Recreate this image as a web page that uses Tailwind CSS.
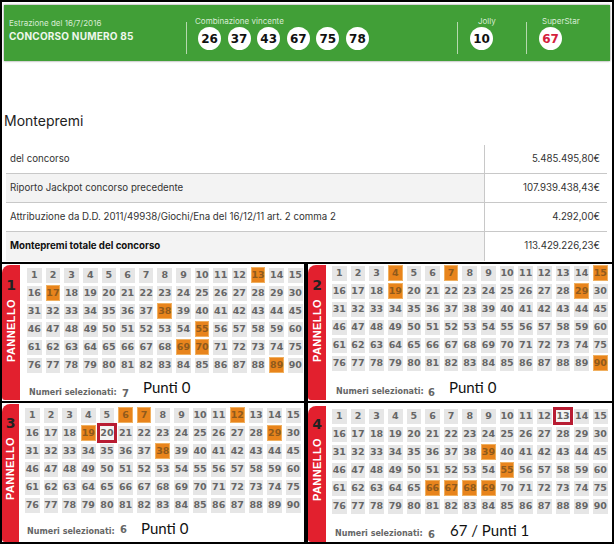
<!DOCTYPE html>
<html lang="en">
  <head>
    <meta charset="UTF-8" />
    <script src="https://cdn.jsdelivr.net/npm/@tailwindcss/browser@4"></script>
    <title>Concorso 85</title>
  </head>
  <body class="bg-white">
    <div class="w-[614px] h-[544px] overflow-hidden flex flex-col font-['Inter','Liberation_Sans',sans-serif]">
      <!-- banner + table -->
      <div class="h-[262px] border-2 border-b-0 border-black px-[2px] pt-[3px]">
        <div class="h-[56px] bg-[#419f37] flex text-white shadow-[0_0_2px_#7a7a7a]">
          <div class="w-[182px] pl-[5px] pt-[12px] shrink-0">
            <p class="text-[8px] leading-[12px] text-[#d8ecd4]">Estrazione del 16/7/2016</p>
            <p class="text-[10px] leading-[14px] mt-[0px] font-bold tracking-[0.2px] text-[#eef7ec]">CONCORSO NUMERO 85</p>
          </div>
          <div class="w-px h-[32px] mt-[17px] bg-[#b5d9ae] shrink-0"></div>
          <div class="w-[270px] pl-[8px] pt-[10px] shrink-0">
            <p class="text-[8px] leading-[12px] text-[#d8ecd4]">Combinazione vincente</p>
            <div class="flex gap-[6.6px] mt-0 pl-[3px] font-['DejaVu_Sans',sans-serif] font-bold text-[12px] text-[#111]">
              <span class="w-[23px] h-[23px] rounded-full bg-white flex items-center justify-center">26</span>
              <span class="w-[23px] h-[23px] rounded-full bg-white flex items-center justify-center">37</span>
              <span class="w-[23px] h-[23px] rounded-full bg-white flex items-center justify-center">43</span>
              <span class="w-[23px] h-[23px] rounded-full bg-white flex items-center justify-center">67</span>
              <span class="w-[23px] h-[23px] rounded-full bg-white flex items-center justify-center">75</span>
              <span class="w-[23px] h-[23px] rounded-full bg-white flex items-center justify-center">78</span>
            </div>
          </div>
          <div class="w-px h-[32px] mt-[17px] bg-[#b5d9ae] shrink-0"></div>
          <div class="w-[68px] pl-[12px] pt-[10px] shrink-0">
            <p class="text-[8px] leading-[12px] text-[#d8ecd4] pl-[8px]">Jolly</p>
            <span class="w-[23px] h-[23px] rounded-full bg-white flex items-center justify-center font-['DejaVu_Sans',sans-serif] font-bold text-[12px] text-[#111]">10</span>
          </div>
          <div class="w-px h-[32px] mt-[17px] bg-[#b5d9ae] shrink-0"></div>
          <div class="pl-[12px] pt-[10px]">
            <p class="text-[8px] leading-[12px] text-[#d8ecd4] pl-[3px]">SuperStar</p>
            <span class="w-[23px] h-[23px] rounded-full bg-white flex items-center justify-center font-['DejaVu_Sans',sans-serif] font-bold text-[12px] text-[#d4213d]">67</span>
          </div>
        </div>

        <h2 class="mt-[50px] text-[14px] leading-[20px] text-[#222]">Montepremi</h2>

        <div class="mt-[14px] ml-[2px] mr-[3px] text-[9.7px] text-[#333]">
          <div class="flex h-[29px] border-b border-[#c8c8c8]">
            <div class="w-[479px] pl-[4px] flex items-center border-r border-[#c8c8c8]">del concorso</div>
            <div class="flex-1 pr-[7px] flex items-center justify-end">5.485.495,80€</div>
          </div>
          <div class="flex h-[29px] border-b border-[#c8c8c8] bg-[#f3f3f3]">
            <div class="w-[479px] pl-[4px] flex items-center border-r border-[#c8c8c8]">Riporto Jackpot concorso precedente</div>
            <div class="flex-1 pr-[7px] flex items-center justify-end bg-white">107.939.438,43€</div>
          </div>
          <div class="flex h-[29px] border-b border-[#c8c8c8]">
            <div class="w-[479px] pl-[4px] flex items-center border-r border-[#c8c8c8]">Attribuzione da D.D. 2011/49938/Giochi/Ena del 16/12/11 art. 2 comma 2</div>
            <div class="flex-1 pr-[7px] flex items-center justify-end">4.292,00€</div>
          </div>
          <div class="flex h-[29px] bg-[#f3f3f3]">
            <div class="w-[479px] pl-[4px] flex items-center border-r border-[#c8c8c8] font-bold text-[#111]">Montepremi totale del concorso</div>
            <div class="flex-1 pr-[7px] flex items-center justify-end bg-white">113.429.226,23€</div>
          </div>
        </div>
      </div>

      <!-- panels -->
      <div class="flex-1 grid grid-cols-[306px_308px] grid-rows-[141px_141px]">
        <div class="panel border-2 border-black flex" data-n="1" data-on="13,17,38,55,69,70,89" data-red="">
          <div class="tab w-[18px] mt-[1px] mb-[1px] rounded-tl-[8px] rounded-bl-[3px] bg-[#e2202e] shrink-0 flex flex-col items-center">
            <span class="mt-[12px] text-[14px] leading-[16px] font-bold text-[#222] font-['DejaVu_Sans',sans-serif]">1</span>
            <span class="mt-[6px] [writing-mode:vertical-rl] rotate-180 text-[11px] font-bold text-white tracking-[0.4px] font-['Liberation_Sans',sans-serif]">PANNELLO</span>
          </div>
          <div class="flex-1 pl-[5px] pt-[2px] min-w-0">
            <div class="cells grid grid-cols-[repeat(15,18.65px)] auto-rows-[18px] font-['DejaVu_Sans',sans-serif] text-[9.5px] font-bold text-[#666]"></div>
            <div class="flex items-center h-[16px] mt-[11px] pl-[4px]">
              <span class="w-[93px] font-['DejaVu_Sans',sans-serif] text-[8px] font-bold text-[#666] whitespace-nowrap">Numeri selezionati:</span>
              <span class="w-[21px] font-['DejaVu_Sans',sans-serif] text-[10px] font-bold text-[#666]">7</span>
              <span class="font-['Lato',sans-serif] text-[15px] leading-[18px] text-[#111] -mt-[12px]">Punti 0</span>
            </div>
          </div>
        </div>

        <div class="panel border-2 border-black flex" data-n="2" data-on="4,7,15,19,29,90" data-red="">
          <div class="tab w-[18px] mt-[1px] mb-[1px] rounded-tl-[8px] rounded-bl-[3px] bg-[#e2202e] shrink-0 flex flex-col items-center">
            <span class="mt-[12px] text-[14px] leading-[16px] font-bold text-[#222] font-['DejaVu_Sans',sans-serif]">2</span>
            <span class="mt-[6px] [writing-mode:vertical-rl] rotate-180 text-[11px] font-bold text-white tracking-[0.4px] font-['Liberation_Sans',sans-serif]">PANNELLO</span>
          </div>
          <div class="flex-1 pl-[4px] min-w-0">
            <div class="cells grid grid-cols-[repeat(15,18.65px)] auto-rows-[18px] font-['DejaVu_Sans',sans-serif] text-[9.5px] font-bold text-[#666]"></div>
            <div class="flex items-center h-[16px] mt-[12px] pl-[6px]">
              <span class="w-[92px] font-['DejaVu_Sans',sans-serif] text-[8px] font-bold text-[#666] whitespace-nowrap">Numeri selezionati:</span>
              <span class="w-[21px] font-['DejaVu_Sans',sans-serif] text-[10px] font-bold text-[#666]">6</span>
              <span class="font-['Lato',sans-serif] text-[15px] leading-[18px] text-[#111] -mt-[10px]">Punti 0</span>
            </div>
          </div>
        </div>

        <div class="panel border-2 border-t-0 border-black flex" data-n="3" data-on="6,7,12,19,29,38" data-red="20">
          <div class="tab w-[17px] mt-[1px] rounded-tl-[8px] rounded-bl-[3px] bg-[#e2202e] shrink-0 flex flex-col items-center">
            <span class="mt-[11px] text-[14px] leading-[16px] font-bold text-[#222] font-['DejaVu_Sans',sans-serif]">3</span>
            <span class="mt-[6px] [writing-mode:vertical-rl] rotate-180 text-[11px] font-bold text-white tracking-[0.4px] font-['Liberation_Sans',sans-serif]">PANNELLO</span>
          </div>
          <div class="flex-1 pl-[4px] pt-[3px] min-w-0">
            <div class="cells grid grid-cols-[repeat(15,18.65px)] auto-rows-[18px] font-['DejaVu_Sans',sans-serif] text-[9.5px] font-bold text-[#666]"></div>
            <div class="flex items-center h-[16px] mt-[10px] pl-[4px]">
              <span class="w-[93px] font-['DejaVu_Sans',sans-serif] text-[8px] font-bold text-[#666] whitespace-nowrap">Numeri selezionati:</span>
              <span class="w-[21px] font-['DejaVu_Sans',sans-serif] text-[10px] font-bold text-[#666] -mt-[6px]">6</span>
              <span class="font-['Lato',sans-serif] text-[15px] leading-[18px] text-[#111] -mt-[8px]">Punti 0</span>
            </div>
          </div>
        </div>

        <div class="panel border-2 border-t-0 border-black flex" data-n="4" data-on="39,55,66,67,68,69" data-red="13">
          <div class="tab w-[18px] mt-[3px] rounded-tl-[8px] rounded-bl-[3px] bg-[#e2202e] shrink-0 flex flex-col items-center">
            <span class="mt-[10px] text-[14px] leading-[16px] font-bold text-[#222] font-['DejaVu_Sans',sans-serif]">4</span>
            <span class="mt-[6px] [writing-mode:vertical-rl] rotate-180 text-[11px] font-bold text-white tracking-[0.4px] font-['Liberation_Sans',sans-serif]">PANNELLO</span>
          </div>
          <div class="flex-1 pl-[4px] pt-[4px] min-w-0">
            <div class="cells grid grid-cols-[repeat(15,18.65px)] auto-rows-[18px] font-['DejaVu_Sans',sans-serif] text-[9.5px] font-bold text-[#666]"></div>
            <div class="flex items-center h-[16px] mt-[11px] pl-[5px]">
              <span class="w-[93px] font-['DejaVu_Sans',sans-serif] text-[8px] font-bold text-[#666] whitespace-nowrap">Numeri selezionati:</span>
              <span class="w-[22px] font-['DejaVu_Sans',sans-serif] text-[10px] font-bold text-[#666]">6</span>
              <span class="font-['Lato',sans-serif] text-[15px] leading-[18px] text-[#111] -mt-[8px]">67 / Punti 1</span>
            </div>
          </div>
        </div>
      </div>
    </div>

    <script>
      document.querySelectorAll(".panel").forEach(function (panel) {
        let on = panel.dataset.on.split(",");
        let red = panel.dataset.red;
        let html = "";
        for (let i = 1; i <= 90; i++) {
          let cls = "mx-[2px] my-[1.5px] flex items-center justify-center bg-[#e6e6e6]";
          if (on.includes(String(i))) {
            cls = "mx-[2px] my-[1px] flex items-center justify-center bg-[#e8841c] text-[#8f5a1c] border border-[#f0b060]";
          }
          if (String(i) == red) {
            // the red frame on panel 4 is flatter than the one on panel 3
            cls = i == 13
              ? "relative z-10 -mx-[1px] my-0 flex items-center justify-center bg-[#f4f4f4] border-[3px] border-[#b81c32]"
              : "relative z-10 -mx-[1px] -my-[1px] flex items-center justify-center bg-[#f4f4f4] border-[3px] border-[#b81c32]";
          }
          html += '<div class="' + cls + '">' + i + "</div>";
        }
        panel.querySelector(".cells").innerHTML = html;
      });
    </script>
  </body>
</html>
